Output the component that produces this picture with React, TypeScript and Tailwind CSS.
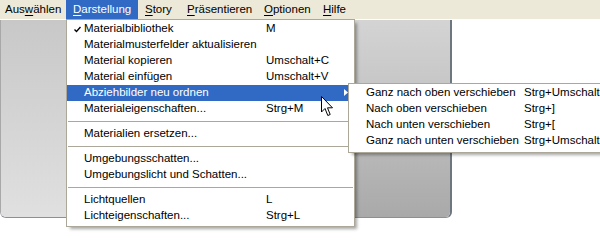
type Row =
  | { kind: "item"; label: string; shortcut?: string; checked?: boolean; active?: boolean; sub?: boolean }
  | { kind: "sep" };

const mainRows: Row[] = [
  { kind: "item", label: "Materialbibliothek", shortcut: "M", checked: true },
  { kind: "item", label: "Materialmusterfelder aktualisieren" },
  { kind: "item", label: "Material kopieren", shortcut: "Umschalt+C" },
  { kind: "item", label: "Material einfügen", shortcut: "Umschalt+V" },
  { kind: "item", label: "Abziehbilder neu ordnen", active: true, sub: true },
  { kind: "item", label: "Materialeigenschaften...", shortcut: "Strg+M" },
  { kind: "sep" },
  { kind: "item", label: "Materialien ersetzen..." },
  { kind: "sep" },
  { kind: "item", label: "Umgebungsschatten..." },
  { kind: "item", label: "Umgebungslicht und Schatten..." },
  { kind: "sep" },
  { kind: "item", label: "Lichtquellen", shortcut: "L" },
  { kind: "item", label: "Lichteigenschaften...", shortcut: "Strg+L" },
];

const subRows = [
  { label: "Ganz nach oben verschieben", shortcut: "Strg+Umschalt+]" },
  { label: "Nach oben verschieben", shortcut: "Strg+]" },
  { label: "Nach unten verschieben", shortcut: "Strg+[" },
  { label: "Ganz nach unten verschieben", shortcut: "Strg+Umschalt+[" },
];

function MenuBarItem({
  width,
  pad,
  before,
  mnemonic,
  after,
  open,
}: {
  width: string;
  pad: string;
  before: string;
  mnemonic: string;
  after: string;
  open?: boolean;
}) {
  return (
    <div
      className={`${width} ${pad} flex h-full items-center ${open ? "bg-[#316ac5] text-white" : "text-black"}`}
    >
      <span>
        {before}
        <span className="underline underline-offset-2">{mnemonic}</span>
        {after}
      </span>
    </div>
  );
}

export default function App() {
  return (
    <div className="relative h-[250px] w-[600px] overflow-hidden bg-white font-['Liberation_Sans',Arial,sans-serif] text-[11.5px] text-black">
      {/* menubar */}
      <div className="flex h-[19px] bg-[#ece9d8]">
        <MenuBarItem width="w-[66px]" pad="pl-[5px]" before="Aus" mnemonic="w" after="ählen" />
        <MenuBarItem width="w-[72px]" pad="pl-[7px]" before="" mnemonic="D" after="arstellung" open />
        <MenuBarItem width="w-[42px]" pad="pl-[7px]" before="" mnemonic="S" after="tory" />
        <MenuBarItem width="w-[77px]" pad="pl-[7px]" before="" mnemonic="P" after="räsentieren" />
        <MenuBarItem width="w-[59px]" pad="pl-[7px]" before="" mnemonic="O" after="ptionen" />
        <MenuBarItem width="w-[50px]" pad="pl-[7px]" before="" mnemonic="H" after="ilfe" />
      </div>

      {/* panel behind the menu */}
      <div className="mt-[1px] flex h-[198px] w-[452px] overflow-hidden rounded-b-[6px] border-b border-l border-r-2 border-b-[#8a9098] border-l-[#a8a8a8] border-r-[#6e7780]">
        <div className="flex-1 bg-gradient-to-b from-[#c8c8c8] to-[#e0e0e0]" />
        <div className="w-[97px] border-l border-[#c4c4c4] bg-gradient-to-b from-[#d4d4d4] via-[#c0c0c0] to-[#a9a9a9]" />
      </div>

      {/* main dropdown */}
      <div className="absolute left-[66px] top-[19px] w-[289px] border border-[#aca899] bg-white pb-[2px] pt-[1px] shadow-[3px_3px_3px_-1px_rgba(0,0,0,0.35)]">
        {mainRows.map((row, i) =>
          row.kind === "sep" ? (
            <div key={i} className="flex h-[9px] items-center px-[1px]">
              <div className="h-px w-full bg-[#aca899]" />
            </div>
          ) : (
            <div
              key={i}
              className={`relative flex h-[16px] items-center pl-[17px] ${row.active ? "bg-[#316ac5] text-white" : ""}`}
            >
              {row.checked && (
                <svg className="absolute left-[7px] top-[5px]" width="7" height="7" viewBox="0 0 7 7">
                  <path d="M0.5 3.5 L2.5 5.5 L6.5 1" fill="none" stroke="black" strokeWidth="1.4" />
                </svg>
              )}
              <span className="w-[182px] whitespace-nowrap">{row.label}</span>
              {row.shortcut && <span className="whitespace-nowrap">{row.shortcut}</span>}
              {row.sub && (
                <svg className="absolute right-[6px] top-[4px]" width="4" height="7" viewBox="0 0 4 7">
                  <path d="M0 0 L4 3.5 L0 7 Z" fill="white" />
                </svg>
              )}
            </div>
          )
        )}
      </div>

      {/* submenu */}
      <div className="absolute left-[348px] top-[83px] w-[290px] border border-[#aca899] bg-white pb-[3px] pt-[1px] shadow-[3px_3px_3px_-1px_rgba(0,0,0,0.35)]">
        {subRows.map((r) => (
          <div key={r.label} className="flex h-[16px] items-center pl-[17px]">
            <span className="w-[158px] whitespace-nowrap">{r.label}</span>
            <span className="whitespace-nowrap">{r.shortcut}</span>
          </div>
        ))}
      </div>

      {/* mouse pointer */}
      <svg className="absolute left-[321px] top-[96px]" width="13" height="21" viewBox="0 0 13 21">
        <path
          d="M0.5 0.5 L0.5 16 L4 12.5 L6.8 19.5 L9.2 18.5 L6.5 11.8 L11.5 11.8 Z"
          fill="white"
          stroke="black"
          strokeWidth="1"
          strokeLinejoin="miter"
        />
      </svg>
    </div>
  );
}
